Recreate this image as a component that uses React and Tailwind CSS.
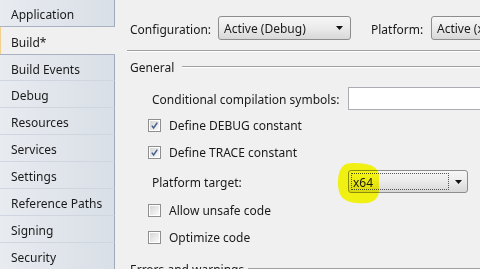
import React from 'react'

// VS project properties page, "Build" tab
const tabs = ['Application', 'Build*', 'Build Events', 'Debug', 'Resources', 'Services', 'Settings', 'Reference Paths', 'Signing', 'Security']

function Caret() {
  return (
    <svg width="7" height="4" viewBox="0 0 7 4">
      <path d="M0 0h7L3.5 4z" fill="#111" />
    </svg>
  )
}

function Combo({ className, children }) {
  return (
    <div
      className={`flex h-[24px] shrink-0 items-center justify-between rounded-[3px] border border-[#8d8d8d] bg-gradient-to-b from-[#f6f6f6] via-[#ebebeb] to-[#d8d8d8] pl-[5px] pr-[7px] ${className}`}
    >
      <span className="whitespace-nowrap pt-[2px]">{children}</span>
      <Caret />
    </div>
  )
}

function Check({ checked }) {
  return (
    <span className="flex h-[13px] w-[13px] shrink-0 items-center justify-center border border-[#8e8f8f] bg-white p-px">
      <span className="flex h-full w-full items-center justify-center bg-gradient-to-br from-[#d6d6d6] to-[#fafafa]">
        {checked && (
          <svg width="9" height="9" viewBox="0 0 9 9">
            <path d="M1.8 4.6 L3.6 6.9 L7.3 1.6" stroke="#485d8f" strokeWidth="1.5" fill="none" />
          </svg>
        )}
      </span>
    </span>
  )
}

function CheckRow({ checked, label, className }) {
  return (
    <div className={`flex h-[13px] items-center pl-[33px] ${className}`}>
      <Check checked={checked} />
      <span className="ml-[8px] whitespace-nowrap pt-[1px]">{label}</span>
    </div>
  )
}

function Groove({ className }) {
  return <div className={`h-[2px] border-t border-b border-t-[#a0a0a0] border-b-white ${className}`} />
}

export default function App() {
  return (
    <div className="flex h-[269px] w-[480px] overflow-hidden font-['Noto_Sans',sans-serif] text-[12px] text-[#1a1a1a]">
      {/* left tab strip */}
      <div className="flex w-[115px] shrink-0 flex-col bg-gradient-to-r from-[#e8ebf0] to-[#d9dfe7]">
        {tabs.map((t, i) => {
          if (i === 1)
            return (
              <div key={t} className="flex h-[27px] shrink-0 items-center border-l border-[#f2cf8a] bg-[#f0f0f0] pl-[10px] pt-[4px]">
                {t}
              </div>
            )
          return (
            <div
              key={t}
              className={`flex h-[27px] shrink-0 items-center border-r border-[#9eaaba] pl-[11px] pt-[4px] ${
                i === 0 ? 'border-b border-b-[#a8b2c2]' : i === 2 ? 'border-t border-t-[#a8b2c2] border-b border-b-[#d0d6df]' : 'border-b border-b-[#d0d6df]'
              }`}
            >
              {t}
            </div>
          )
        })}
      </div>

      {/* page */}
      <div className="flex min-w-0 flex-1 flex-col overflow-hidden bg-[#f0f0f0]">
        <div className="flex h-[40px] shrink-0 items-center pl-[15px] pt-[16px]">
          <span className="w-[88px] shrink-0 pt-[3px]">Configuration:</span>
          <Combo className="w-[133px]">Active (Debug)</Combo>
          <span className="ml-[20px] w-[60px] shrink-0 pt-[3px]">Platform:</span>
          <Combo className="w-[120px]">Active (x64)</Combo>
        </div>

        <Groove className="ml-[12px] mt-[10px] shrink-0" />

        <div className="mt-[7px] flex h-[16px] shrink-0 items-center pl-[15px]">
          <span className="w-[52px] shrink-0 pt-[2px]">General</span>
          <Groove className="flex-1" />
        </div>

        <div className="mt-[12px] flex h-[23px] shrink-0 items-center pl-[37px]">
          <span className="w-[196px] shrink-0 whitespace-nowrap pt-[2px]">Conditional compilation symbols:</span>
          <div className="h-[23px] w-[140px] shrink-0 border border-[#abadb3] bg-white" />
        </div>

        <CheckRow checked label="Define DEBUG constant" className="mt-[9px] shrink-0" />
        <CheckRow checked label="Define TRACE constant" className="mt-[14px] shrink-0" />

        <div className="mt-[11px] flex h-[23px] shrink-0 items-center pl-[37px]">
          <span className="w-[196px] shrink-0 pt-[2px]">Platform target:</span>
          <div className="relative flex h-[23px] w-[120px] shrink-0 items-center rounded-[3px] border border-[#8d8d8d] bg-gradient-to-b from-[#f6f6f6] via-[#ebebeb] to-[#d8d8d8] p-[2px]">
            <div className="flex h-full w-[98px] items-center border border-dotted border-[#555] pl-[1px] pt-[2px]">x64</div>
            <div className="flex flex-1 justify-center pl-[2px]">
              <Caret />
            </div>
            {/* marker highlight */}
            <svg className="pointer-events-none absolute left-[-12px] top-[-9px] mix-blend-multiply" width="44" height="42" viewBox="0 0 44 42">
              <path
                d="M9 2 C16 0 26 1 33 3 C38 5 42 8 42 14 L42 28 C42 35 38 40 30 41 C22 42 12 41 7 37 C2 33 1 27 1 20 C1 12 3 5 9 2 Z"
                fill="#ffff00"
                opacity="0.92"
              />
            </svg>
          </div>
        </div>

        <CheckRow label="Allow unsafe code" className="mt-[11px] shrink-0" />
        <CheckRow label="Optimize code" className="mt-[14px] shrink-0" />

        <div className="mt-[17px] flex h-[16px] shrink-0 items-center pl-[15px]">
          <span className="w-[118px] shrink-0 whitespace-nowrap pt-[2px]">Errors and warnings</span>
          <Groove className="flex-1" />
        </div>
      </div>
    </div>
  )
}
